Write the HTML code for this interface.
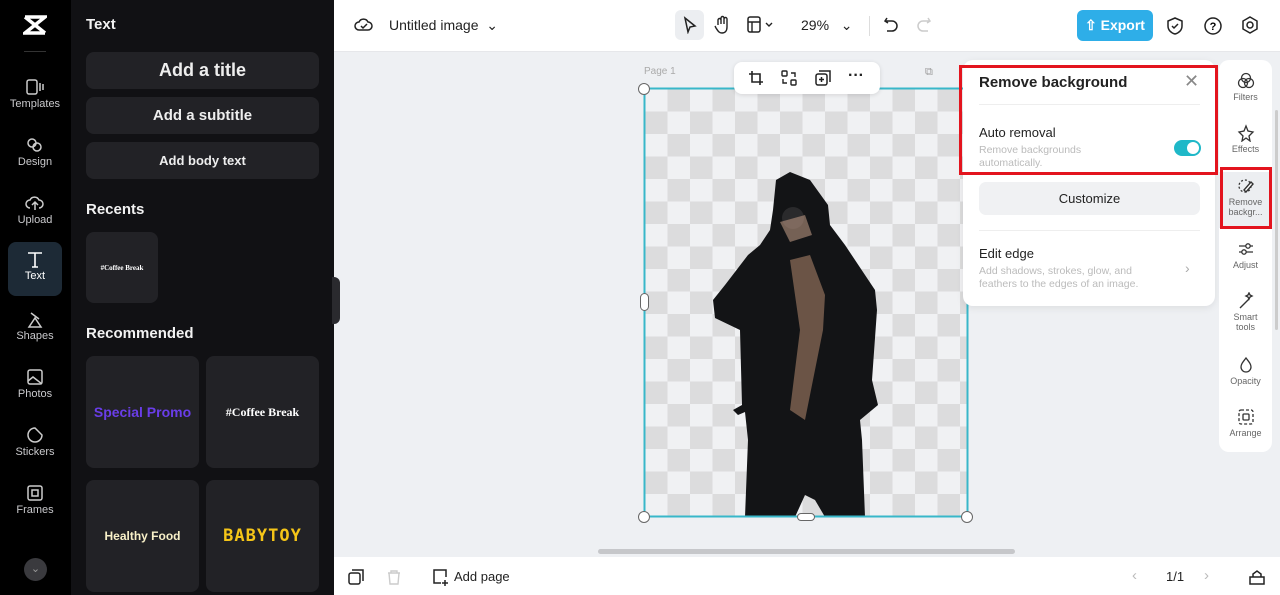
<!DOCTYPE html>
<html><head><meta charset="utf-8"><style>
*{box-sizing:border-box;margin:0;padding:0}
body{width:1280px;height:595px;overflow:hidden;font-family:"Liberation Sans",sans-serif;background:#eef0f3;position:relative}
.abs{position:absolute}
#rail{left:0;top:0;width:71px;height:595px;background:#000}
.ri{position:absolute;left:8px;width:54px;height:54px;color:#c9c9cc;font-size:11px;text-align:center}
.ri svg{display:block;margin:8px auto 2px}
#panel{left:71px;top:0;width:263px;height:595px;background:#111114}
.btn{position:absolute;left:15px;width:233px;background:#222226;border-radius:8px;color:#eee;font-weight:bold;text-align:center}
.h{position:absolute;left:15px;color:#f2f2f2;font-weight:bold;font-size:15px}
.card{position:absolute;width:113px;background:#222226;border-radius:8px;display:flex;align-items:center;justify-content:center;font-weight:bold}
#top{left:334px;top:0;width:946px;height:52px;background:#fff;border-bottom:1px solid #e6e7ea}
#bot{left:334px;top:557px;width:946px;height:38px;background:#fff}
.checker{left:645px;top:89px;width:323px;height:428px;background-color:#f0f1f3;
background-image:linear-gradient(45deg,#dcdcdd 25%,transparent 25%,transparent 75%,#dcdcdd 75%),linear-gradient(45deg,#dcdcdd 25%,transparent 25%,transparent 75%,#dcdcdd 75%);
background-size:45px 45px;background-position:0 0,22.5px 22.5px}
.hd{position:absolute;width:12px;height:12px;border-radius:50%;background:#fff;border:1px solid #666}
#rb{left:963px;top:60px;width:252px;height:246px;background:#fff;border-radius:10px;box-shadow:0 2px 8px rgba(0,0,0,.08)}
#side{left:1219px;top:60px;width:53px;height:392px;background:#fff;border-radius:10px}
.si{position:absolute;left:0;width:53px;text-align:center;font-size:9px;color:#666}
.si svg{display:block;margin:0 auto 2px}
</style></head><body>
<div id="rail" class="abs">
  <svg class="abs" style="left:23px;top:14px" width="24" height="22" viewBox="0 0 24 22"><path d="M2 3h20L2 19h20M2 3l20 16" stroke="#fff" stroke-width="3.5" fill="none"/></svg>
  <div class="abs" style="left:24px;top:51px;width:22px;height:1px;background:#333"></div>
  <div class="ri" style="top:70px"><svg width="20" height="18"><rect x="2" y="2" width="10" height="14" rx="2" stroke="#ccc" fill="none" stroke-width="1.5"/><path d="M15 5v8M18 6v6" stroke="#ccc" stroke-width="1.5"/></svg>Templates</div>
  <div class="ri" style="top:128px"><svg width="20" height="18"><circle cx="7" cy="7" r="4" stroke="#ccc" fill="none" stroke-width="1.5"/><circle cx="12" cy="11" r="4" stroke="#ccc" fill="none" stroke-width="1.5"/></svg>Design</div>
  <div class="ri" style="top:186px"><svg width="20" height="18"><path d="M5 14a4 4 0 010-8 5 5 0 019 0 4 4 0 010 8M10 8v8M7 11l3-3 3 3" stroke="#ccc" fill="none" stroke-width="1.5"/></svg>Upload</div>
  <div class="ri" style="top:242px;height:54px;background:#1d2a36;border-radius:8px;color:#fff"><svg width="20" height="18"><path d="M3 3h14M10 3v14M7 17h6" stroke="#fff" stroke-width="1.6" fill="none"/></svg>Text</div>
  <div class="ri" style="top:302px"><svg width="20" height="18"><path d="M6 3l8 6M4 17h12l-6-9z" stroke="#ccc" fill="none" stroke-width="1.5"/></svg>Shapes</div>
  <div class="ri" style="top:360px"><svg width="20" height="18"><rect x="3" y="2" width="14" height="14" rx="2" stroke="#ccc" fill="none" stroke-width="1.5"/><path d="M3 13l5-4 9 7" stroke="#ccc" fill="none" stroke-width="1.5"/></svg>Photos</div>
  <div class="ri" style="top:418px"><svg width="20" height="18"><path d="M10 2a7 7 0 107 7l-7-7z" stroke="#ccc" fill="none" stroke-width="1.5"/></svg>Stickers</div>
  <div class="ri" style="top:476px"><svg width="20" height="18"><rect x="3" y="2" width="14" height="14" rx="2" stroke="#ccc" fill="none" stroke-width="1.5"/><rect x="7" y="6" width="6" height="6" stroke="#ccc" fill="none" stroke-width="1.5"/></svg>Frames</div>
  <div class="abs" style="left:24px;top:558px;width:23px;height:23px;border-radius:50%;background:#3a3a3e;color:#999;font-size:11px;text-align:center;line-height:23px">⌄</div>
</div>
<div id="panel" class="abs">
  <div class="h" style="top:16px">Text</div>
  <div class="btn" style="top:52px;height:37px;font-size:18px;line-height:37px">Add a title</div>
  <div class="btn" style="top:97px;height:37px;font-size:15px;line-height:37px">Add a subtitle</div>
  <div class="btn" style="top:142px;height:37px;font-size:13px;line-height:37px">Add body text</div>
  <div class="h" style="top:201px">Recents</div>
  <div class="card" style="left:15px;top:232px;width:72px;height:71px;font-family:'Liberation Serif',serif;font-size:7px;color:#fff">#Coffee Break</div>
  <div class="h" style="top:325px">Recommended</div>
  <div class="card" style="left:15px;top:356px;height:112px;color:#6a3de8;font-size:14px">Special Promo</div>
  <div class="card" style="left:135px;top:356px;height:112px;color:#fff;font-family:'Liberation Serif',serif;font-size:12px">#Coffee Break</div>
  <div class="card" style="left:15px;top:480px;height:112px;color:#f8f0c8;font-size:12px">Healthy Food</div>
  <div class="card" style="left:135px;top:480px;height:112px;color:#f5c518;font-size:17px;letter-spacing:1px;font-family:'DejaVu Sans Mono',monospace">BABYTOY</div>
</div>
<div class="abs" style="left:332px;top:277px;width:8px;height:47px;background:#2a2a2e;border-radius:0 6px 6px 0"></div>
<div id="top" class="abs">
  <svg class="abs" style="left:20px;top:16px" width="20" height="18"><path d="M5 14a4 4 0 010-8 5 5 0 019 0 4 4 0 010 8z M7 10l2 2 4-4" stroke="#222" fill="none" stroke-width="1.5"/></svg>
  <div class="abs" style="left:55px;top:17px;font-size:14px;color:#222">Untitled image &nbsp;⌄</div>
  <div class="abs" style="left:341px;top:10px;width:29px;height:30px;background:#eceef1;border-radius:6px"></div>
  <svg class="abs" style="left:348px;top:16px" width="16" height="18"><path d="M3 2l10 8-5 1-2 5z" stroke="#222" fill="none" stroke-width="1.5"/></svg>
  <svg class="abs" style="left:379px;top:15px" width="18" height="20"><path d="M5 10V5a1.5 1.5 0 013 0v4V3a1.5 1.5 0 013 0v6V4a1.5 1.5 0 013 0v8c0 4-2 6-5 6s-4-2-6-5l-1-2" stroke="#222" fill="none" stroke-width="1.4"/></svg>
  <svg class="abs" style="left:413px;top:16px" width="30" height="18"><rect x="1" y="1" width="12" height="15" rx="2" stroke="#222" fill="none" stroke-width="1.5"/><path d="M1 6h12M5 6v10M19 7l3 3 3-3" stroke="#222" fill="none" stroke-width="1.4"/></svg>
  <div class="abs" style="left:467px;top:17px;font-size:14px;color:#222">29% &nbsp;&nbsp;⌄</div>
  <div class="abs" style="left:535px;top:16px;width:1px;height:20px;background:#ddd"></div>
  <svg class="abs" style="left:549px;top:16px" width="16" height="18"><path d="M4 2L2 5l3 2M2 5h7a5 5 0 010 10H4" stroke="#222" fill="none" stroke-width="1.5"/></svg>
  <svg class="abs" style="left:582px;top:16px" width="16" height="18"><path d="M12 2l2 3-3 2M14 5H7a5 5 0 000 10h5" stroke="#ccc" fill="none" stroke-width="1.5"/></svg>
  <div class="abs" style="left:743px;top:10px;width:76px;height:31px;background:#2eaee8;border-radius:6px;color:#fff;font-weight:bold;font-size:14px;line-height:31px;text-align:center">⇧ Export</div>
  <svg class="abs" style="left:832px;top:16px" width="18" height="20"><path d="M9 2l7 3v5c0 4-3 7-7 8-4-1-7-4-7-8V5z M6 10l2 2 4-4" stroke="#222" fill="none" stroke-width="1.5"/></svg>
  <svg class="abs" style="left:869px;top:16px" width="20" height="20"><circle cx="10" cy="10" r="8" stroke="#222" fill="none" stroke-width="1.5"/><text x="10" y="14" font-size="11" text-anchor="middle" font-family="Liberation Sans" font-weight="bold">?</text></svg>
  <svg class="abs" style="left:906px;top:15px" width="20" height="20"><path d="M10 2l7 4v8l-7 4-7-4V6z" stroke="#222" fill="none" stroke-width="1.5"/><circle cx="10" cy="10" r="3" stroke="#222" fill="none" stroke-width="1.5"/></svg>
</div>
<div class="abs" style="left:644px;top:66px;font-size:10px;color:#aaa">Page 1</div>
<div class="abs checker"></div>
<svg class="abs" style="left:0;top:0" width="1280" height="595">
<path d="M773 210 770 230 760 245 748 255 725 285 713 300 715 318 740 330 742 405 733 410 738 415 745 412 748 440 745 517 795 517 805 495 815 500 825 517 865 517 862 440 860 420 878 405 872 380 877 310 875 290 845 245 830 225 828 205 810 180 790 172 776 180Z" fill="#131416"/>
<path d="M790 260 810 255 825 295 823 330 805 420 790 410 800 330Z" fill="#6b5446"/>
<circle cx="793" cy="218" r="11" fill="#2a2a2c"/>
<path d="M780 222 805 215 812 235 790 242Z" fill="#b89580" opacity=".6"/>
<rect x="644.5" y="88.5" width="323" height="428" fill="none" stroke="#38b7c9" stroke-width="2"/>
</svg>
<div class="hd" style="left:638px;top:83px"></div>
<div class="hd" style="left:638px;top:511px"></div>
<div class="hd" style="left:961px;top:511px"></div>
<div class="abs" style="left:640px;top:293px;width:9px;height:18px;border-radius:5px;background:#fff;border:1px solid #666"></div>
<div class="abs" style="left:797px;top:513px;width:18px;height:8px;border-radius:5px;background:#fff;border:1px solid #666"></div>
<div class="abs" style="left:734px;top:62px;width:146px;height:32px;background:#fff;border-radius:8px;box-shadow:0 1px 5px rgba(0,0,0,.12)">
  <svg class="abs" style="left:14px;top:8px" width="16" height="16"><path d="M4 1v11h11M1 4h11v11" stroke="#222" fill="none" stroke-width="1.6"/></svg>
  <svg class="abs" style="left:47px;top:8px" width="16" height="16"><rect x="1" y="1" width="5" height="5" rx="1" stroke="#222" fill="none" stroke-width="1.4"/><rect x="10" y="10" width="5" height="5" rx="1" stroke="#222" fill="none" stroke-width="1.4"/><path d="M10 3h4v4M6 13H2V9" stroke="#222" fill="none" stroke-width="1.4"/></svg>
  <svg class="abs" style="left:81px;top:8px" width="16" height="16"><rect x="1" y="4" width="11" height="11" rx="2" stroke="#222" fill="none" stroke-width="1.5"/><path d="M4 1h11v11M6.5 7v5M4 9.5h5" stroke="#222" fill="none" stroke-width="1.5"/></svg>
  <div class="abs" style="left:114px;top:5px;font-size:16px;font-weight:bold;color:#222">···</div>
</div>
<div class="abs" style="left:925px;top:66px;font-size:11px;color:#999">⧉</div>
<div id="rb" class="abs">
  <div class="abs" style="left:16px;top:14px;font-size:15px;font-weight:bold;color:#222">Remove background</div>
  <div class="abs" style="left:221px;top:11px;font-size:18px;color:#888">✕</div>
  <div class="abs" style="left:16px;top:44px;width:221px;height:1px;background:#eee"></div>
  <div class="abs" style="left:16px;top:65px;font-size:13px;color:#222">Auto removal</div>
  <div class="abs" style="left:16px;top:84px;font-size:10.5px;color:#bbb;line-height:13px;width:140px">Remove backgrounds automatically.</div>
  <div class="abs" style="left:211px;top:80px;width:27px;height:16px;border-radius:8px;background:#1fb8c8"><div class="abs" style="left:13px;top:2px;width:12px;height:12px;border-radius:50%;background:#fff"></div></div>
  <div class="abs" style="left:16px;top:122px;width:221px;height:33px;background:#f0f1f3;border-radius:7px;text-align:center;line-height:33px;font-size:13px;color:#222">Customize</div>
  <div class="abs" style="left:16px;top:170px;width:221px;height:1px;background:#eee"></div>
  <div class="abs" style="left:16px;top:186px;font-size:13px;color:#222">Edit edge</div>
  <div class="abs" style="left:16px;top:205px;font-size:10.5px;color:#bbb;line-height:13px;width:190px">Add shadows, strokes, glow, and feathers to the edges of an image.</div>
  <div class="abs" style="left:222px;top:200px;font-size:14px;color:#aaa">›</div>
</div>
<div class="abs" style="left:959px;top:65px;width:259px;height:110px;border:3px solid #e3141e"></div>
<div id="side" class="abs">
  <div class="si" style="top:12px"><svg width="18" height="18"><circle cx="9" cy="6" r="4.5" stroke="#333" fill="none" stroke-width="1.3"/><circle cx="6" cy="11" r="4.5" stroke="#333" fill="none" stroke-width="1.3"/><circle cx="12" cy="11" r="4.5" stroke="#333" fill="none" stroke-width="1.3"/></svg>Filters</div>
  <div class="si" style="top:64px"><svg width="18" height="18"><path d="M9 2l2 5 5 1-4 4 1 5-4-3-4 3 1-5-4-4 5-1z" stroke="#333" fill="none" stroke-width="1.3"/></svg>Effects</div>
  <div class="si" style="top:112px;height:56px;background:#eceef1;padding-top:5px;line-height:10px"><svg width="18" height="18"><circle cx="8" cy="9" r="6" stroke="#333" fill="none" stroke-width="1.3" stroke-dasharray="2 2"/><path d="M7 13l7-8 2 2-7 8z" stroke="#333" fill="#fff" stroke-width="1.4"/></svg>Remove<br>backgr...</div>
  <div class="si" style="top:180px"><svg width="18" height="18"><path d="M2 6h14M2 12h14" stroke="#333" stroke-width="1.3"/><circle cx="11" cy="6" r="2.2" fill="#fff" stroke="#333" stroke-width="1.3"/><circle cx="7" cy="12" r="2.2" fill="#fff" stroke="#333" stroke-width="1.3"/></svg>Adjust</div>
  <div class="si" style="top:232px;line-height:10px"><svg width="18" height="18"><path d="M3 16l9-9M11 3l1-2 1 2 2 1-2 1-1 2-1-2-2-1z" stroke="#333" fill="none" stroke-width="1.4"/></svg>Smart<br>tools</div>
  <div class="si" style="top:296px"><svg width="18" height="18"><path d="M9 2c3 4 5 6 5 9a5 5 0 01-10 0c0-3 2-5 5-9z" stroke="#333" fill="none" stroke-width="1.3"/></svg>Opacity</div>
  <div class="si" style="top:348px"><svg width="18" height="18"><rect x="2" y="2" width="14" height="14" rx="2" stroke="#333" fill="none" stroke-width="1.3" stroke-dasharray="3 2"/><rect x="6" y="6" width="6" height="6" rx="1" stroke="#333" fill="none" stroke-width="1.3"/></svg>Arrange</div>
</div>
<div class="abs" style="left:1220px;top:167px;width:52px;height:62px;border:3px solid #e3141e"></div>
<div class="abs" style="left:1275px;top:110px;width:3px;height:220px;background:#ccc;border-radius:2px"></div>
<div class="abs" style="left:598px;top:549px;width:417px;height:5px;background:#c6c7ca;border-radius:3px"></div>
<div id="bot" class="abs">
  <svg class="abs" style="left:14px;top:12px" width="16" height="16"><rect x="1" y="4" width="11" height="11" rx="2" stroke="#222" fill="none" stroke-width="1.5"/><path d="M4 1h11v11" stroke="#222" fill="none" stroke-width="1.5"/></svg>
  <svg class="abs" style="left:52px;top:12px" width="16" height="16"><path d="M2 4h12M5 4V2h6v2M3 4l1 11h8l1-11" stroke="#ccc" fill="none" stroke-width="1.4"/></svg>
  <svg class="abs" style="left:98px;top:11px" width="18" height="18"><path d="M14 9V2H2v13h7M13 12v6M10 15h6" stroke="#222" fill="none" stroke-width="1.5"/></svg>
  <div class="abs" style="left:120px;top:12px;font-size:13px;color:#222">Add page</div>
  <div class="abs" style="left:798px;top:10px;font-size:15px;color:#bbb">‹</div>
  <div class="abs" style="left:832px;top:12px;font-size:13px;color:#222">1/1</div>
  <div class="abs" style="left:870px;top:10px;font-size:15px;color:#bbb">›</div>
  <svg class="abs" style="left:914px;top:12px" width="18" height="16"><path d="M2 8h14v7H2zM5 8V5l4-3 4 3v3" stroke="#222" fill="none" stroke-width="1.5"/></svg>
</div>
</body></html>
